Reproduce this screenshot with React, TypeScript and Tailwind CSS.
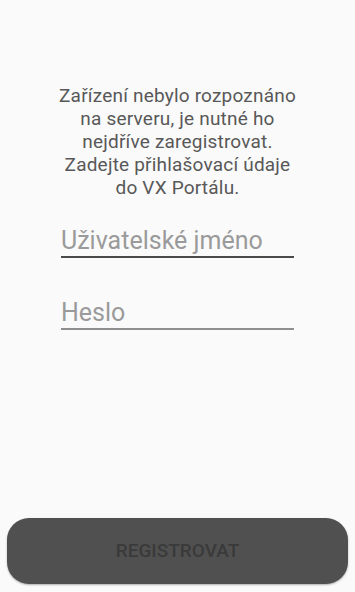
export default function App() {
  return (
    <div
      className="flex h-[592px] w-[355px] flex-col bg-[#fafafa]"
      style={{ fontFamily: "Roboto, 'Noto Sans', sans-serif" }}
    >
      <main className="flex flex-1 flex-col items-center pt-[84px]">
        <p className="text-center text-[19px] leading-[23px] tracking-[0.2px] text-[#585858]">
          Zařízení nebylo rozpoznáno
          <br />
          na serveru, je nutné ho
          <br />
          nejdříve zaregistrovat.
          <br />
          Zadejte přihlašovací údaje
          <br />
          do VX Portálu.
        </p>

        <div className="mt-[19px] w-[233px]">
          <input
            type="text"
            placeholder="Uživatelské jméno"
            className="h-[40px] w-full border-b-2 border-[#4a4a4a] bg-transparent px-0 pt-[6px] text-[25px] text-[#333] outline-none placeholder:text-[#9a9a9a]"
          />
        </div>

        <div className="mt-[32px] w-[233px]">
          <input
            type="password"
            placeholder="Heslo"
            className="h-[40px] w-full border-b-2 border-[#8f8f8f] bg-transparent px-0 pt-[6px] text-[25px] text-[#333] outline-none placeholder:text-[#9a9a9a]"
          />
        </div>
      </main>

      <div className="px-[7px] pb-[8px]">
        <button className="flex h-[66px] w-full items-center justify-center rounded-[22px] bg-[#505050] text-[19px] font-medium text-[#3a3a3a] shadow-[0_1px_2px_rgba(0,0,0,0.3)]">
          REGISTROVAT
        </button>
      </div>
    </div>
  );
}
